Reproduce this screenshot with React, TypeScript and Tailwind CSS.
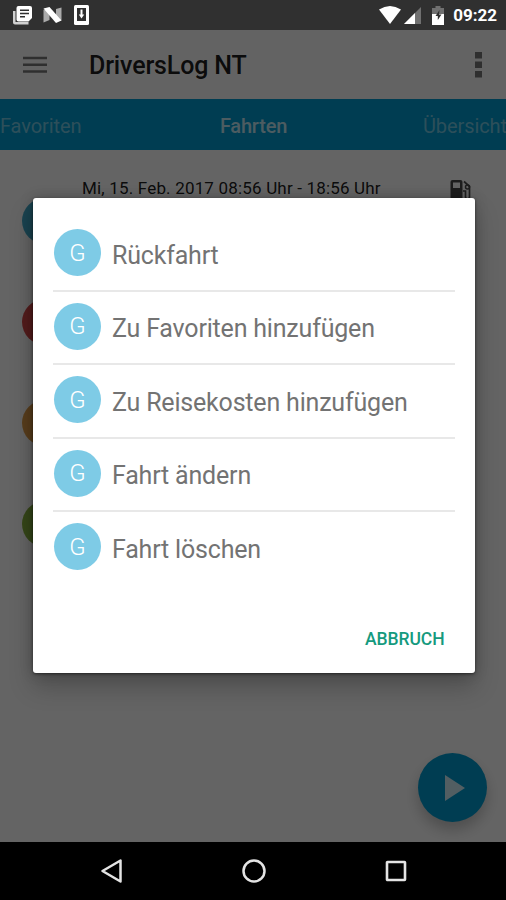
const trips = [
  { id: 1, color: "bg-[#43a9c8]" },
  { id: 2, color: "bg-[#cf4848]" },
  { id: 3, color: "bg-[#dc9a48]" },
  { id: 4, color: "bg-[#86ae3c]" },
];

const actions = [
  "Rückfahrt",
  "Zu Favoriten hinzufügen",
  "Zu Reisekosten hinzufügen",
  "Fahrt ändern",
  "Fahrt löschen",
];

function StatusBar() {
  return (
    <div className="flex h-[30px] shrink-0 items-center justify-between bg-[#303030] pl-3 pr-[9px] text-white">
      <div className="flex items-center gap-[9px]">
        <svg width="21" height="22" viewBox="0 0 21 22">
          <path d="M1 7v11.5a2 2 0 0 0 2 2h13.500v-2.500H3.500V7z" fill="#d0d0d0" />
          <path d="M6.500 2H18a2 2 0 0 1 2 2v10l-3.500 3.500h-10a2 2 0 0 1-2-2V4a2 2 0 0 1 2-2z" fill="#fff" />
          <path d="M8 6.200h9M8 9.500h9M8 12.800h5" stroke="#303030" strokeWidth="1.500" />
        </svg>
        <svg width="21" height="22" viewBox="0 0 21 22">
          <path d="M1.500 5.500v13L7.500 16V7zM19.500 3.500v13L14 15V5z" fill="#aaa" />
          <path d="M1.500 4.500 7.500 3 19.500 16.500 14 19z" fill="#fff" />
        </svg>
        <svg width="19" height="22" viewBox="0 0 19 22">
          <rect x="2" y="1" width="15" height="20" rx="1.500" fill="#fff" />
          <rect x="5" y="4" width="9" height="13" fill="#303030" />
          <path d="M9.500 5.500v6" stroke="#fff" strokeWidth="2" />
          <path d="M6.800 10.500h5.400l-2.700 4z" fill="#fff" />
        </svg>
      </div>
      <div className="flex items-center">
        <svg width="24" height="22" viewBox="0 0 24 22">
          <path d="M1 5.500Q12-1.500 23 5.500L12 20z" fill="#fff" />
        </svg>
        <svg width="19" height="22" viewBox="0 0 19 22" className="ml-px">
          <path d="M18 3v17H1z" fill="#707070" />
          <path d="M12 9v11H1z" fill="#fff" />
        </svg>
        <svg width="14" height="22" viewBox="0 0 14 22" className="ml-[9px]">
          <path d="M4.500 2h5v2H13v6H1V4h3.500z" fill="#707070" />
          <path d="M1 10h12v11H1z" fill="#fff" />
          <path d="M8.500 6 4.500 12h2.300v4L10.500 10.500H8z" fill="#303030" />
        </svg>
        <span className="ml-2 text-[17px] font-bold leading-none">09:22</span>
      </div>
    </div>
  );
}

function AppBar() {
  return (
    <div className="flex h-[69px] shrink-0 items-center bg-[#f8f8f8] pl-[23px] pr-[24.500px]">
      <svg width="24" height="18" viewBox="0 0 24 18">
        <path d="M0 2h24M0 8.800h24M0 15.500h24" stroke="#757575" strokeWidth="2.600" />
      </svg>
      <h1 className="ml-[42px] mt-[2px] flex-1 text-[25px] font-medium leading-8 tracking-[-0.15px] text-black/90">
        DriversLog NT
      </h1>
      <svg width="7" height="26" viewBox="0 0 7 26">
        <path d="M0 0h7v6.500H0zM0 9.500h7V16H0zM0 19h7v6.500H0z" fill="#757575" />
      </svg>
    </div>
  );
}

function Tabs() {
  return (
    <div className="flex h-[51px] shrink-0 items-center justify-between bg-[#0099cc] pt-[2px] text-[20px] text-white/45">
      <span className="w-[84px] whitespace-nowrap tracking-[-0.1px]">Favoriten</span>
      <span className="font-medium tracking-[-0.200px] text-white/75">Fahrten</span>
      <span className="w-[83px] whitespace-nowrap tracking-[-0.1px]">Übersicht</span>
    </div>
  );
}

function TripList() {
  return (
    <div className="flex-1 bg-[#fafafa] pt-[24px]">
      {trips.map((trip, index) => (
        <div key={trip.id} className="flex h-[101px] items-start pl-[22px] pr-[34px]">
          <div className={`mt-6 size-[46px] shrink-0 rounded-full ${trip.color}`} />
          {index === 0 && (
            <>
              <span className="ml-[14px] mt-[2px] flex-1 whitespace-nowrap text-[17px] leading-6 tracking-[0.180px] text-black/90">
                Mi, 15. Feb. 2017 08:56 Uhr - 18:56 Uhr
              </span>
              <svg width="22" height="22" viewBox="0 0 22 22" className="mt-[5px]">
                <path
                  d="M2.500 1h8a2 2 0 0 1 2 2v18H.5V3a2 2 0 0 1 2-2zM3 3.500v5.500h7V3.500z"
                  fill="#4a4a4a"
                  fillRule="evenodd"
                />
                <path d="m14 2.500 5.500 5V18a2 2 0 0 1-4 0v-6H13" fill="none" stroke="#4a4a4a" strokeWidth="1.700" />
                <circle cx="17.500" cy="8" r="2" fill="none" stroke="#4a4a4a" strokeWidth="1.500" />
              </svg>
            </>
          )}
        </div>
      ))}
    </div>
  );
}

function ActionDialog() {
  return (
    <div className="absolute left-[33px] top-[168px] flex h-[475px] w-[441.500px] flex-col rounded-[3px] bg-white px-5 pt-5 shadow-[0_14px_24px_rgba(0,0,0,0.22),0_0_14px_rgba(0,0,0,0.2),0_1px_3px_rgba(0,0,0,0.5)]">
      <ul>
        {actions.map((action) => (
          <li
            key={action}
            className="flex h-[73.500px] items-start border-b-2 border-[#e8e8e8] pl-[1px] pt-[11px] last:border-transparent"
          >
            <span className="grid size-[47px] shrink-0 place-items-center rounded-full bg-[#7ecbe6] text-[24px] font-light leading-none text-white">
              G
            </span>
            <span className="ml-[11px] mt-[10.500px] whitespace-nowrap text-[25px] leading-8 tracking-[-0.190px] text-[#737373]">
              {action}
            </span>
          </li>
        ))}
      </ul>
      <button
        type="button"
        className="mr-[10px] mt-[41px] self-end text-[17.500px] font-medium leading-6 tracking-[-0.080px] text-[#159a7e]"
      >
        ABBRUCH
      </button>
    </div>
  );
}

function NavigationBar() {
  return (
    <div className="flex h-[58px] shrink-0 items-center justify-between bg-black pl-[100px] pr-[98px]">
      <svg width="24" height="26" viewBox="0 0 24 26">
        <path d="M20.500 2.500v21L2.500 13z" fill="none" stroke="#e4e4e4" strokeWidth="2.500" strokeLinejoin="round" />
      </svg>
      <svg width="26" height="26" viewBox="0 0 26 26">
        <circle cx="13" cy="13" r="10.500" fill="none" stroke="#e4e4e4" strokeWidth="2.500" />
      </svg>
      <svg width="24" height="24" viewBox="0 0 24 24">
        <rect x="3" y="3" width="18" height="18" rx="0.500" fill="none" stroke="#e4e4e4" strokeWidth="2.600" />
      </svg>
    </div>
  );
}

export default function App() {
  return (
    <div className="flex h-[900px] w-[506px] flex-col overflow-hidden bg-black font-['Roboto',sans-serif]">
      <StatusBar />
      <div className="relative flex min-h-0 flex-1 flex-col overflow-hidden">
        <AppBar />
        <Tabs />
        <TripList />
        <button
          type="button"
          aria-label="Fahrt starten"
          className="absolute bottom-[20px] right-[19px] grid size-[69px] place-items-center rounded-full bg-[#0099cc] shadow-[0_8px_14px_rgba(0,0,0,0.22)]"
        >
          <svg width="20" height="26" viewBox="0 0 20 26" className="ml-1">
            <path d="M0 0v26l20-13z" fill="#fff" fillOpacity="0.800" />
          </svg>
        </button>
        <div className="absolute inset-0 bg-black/60" />
        <ActionDialog />
      </div>
      <NavigationBar />
    </div>
  );
}
